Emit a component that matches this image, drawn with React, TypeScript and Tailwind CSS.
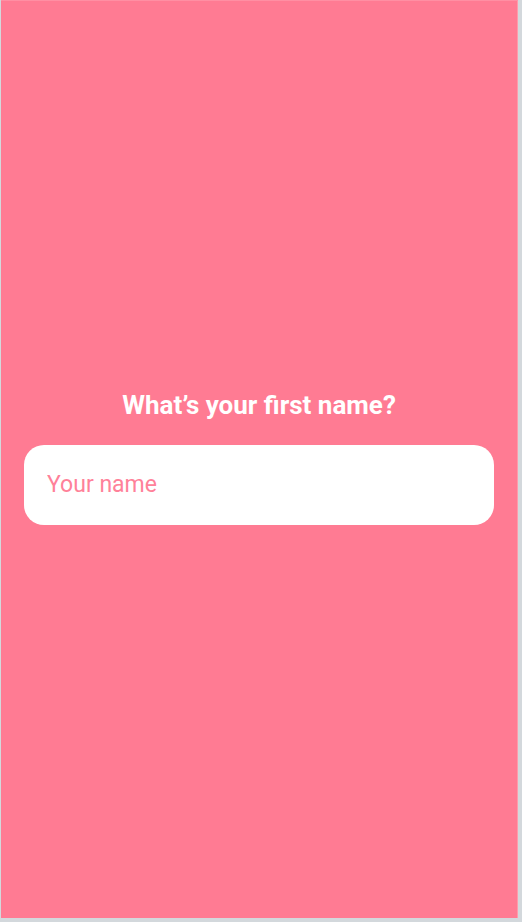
import * as React from "react"

const App = () => {
  return (
    <div className="w-[522px] h-[922px] bg-[#d3d8dc] pl-px" style={{ fontFamily: "Roboto, 'Liberation Sans', sans-serif" }}>
      <div className="w-[517px] h-[918px] bg-[#ff7b93] border-t border-t-[#ff8fa3] border-r border-r-[#ff9aab] flex flex-col justify-center px-[23px] pb-[6px]">
        <h1 className="text-center text-white font-bold text-[26px] leading-[32px]">
          What’s your first name?
        </h1>
        <input
          type="text"
          placeholder="Your name"
          className="mt-6 h-[80px] w-full rounded-[20px] bg-white px-[23px] text-[23px] text-[#ff7b93] placeholder:text-[#ff8199] outline-none"
        />
      </div>
    </div>
  )
}

export default App
